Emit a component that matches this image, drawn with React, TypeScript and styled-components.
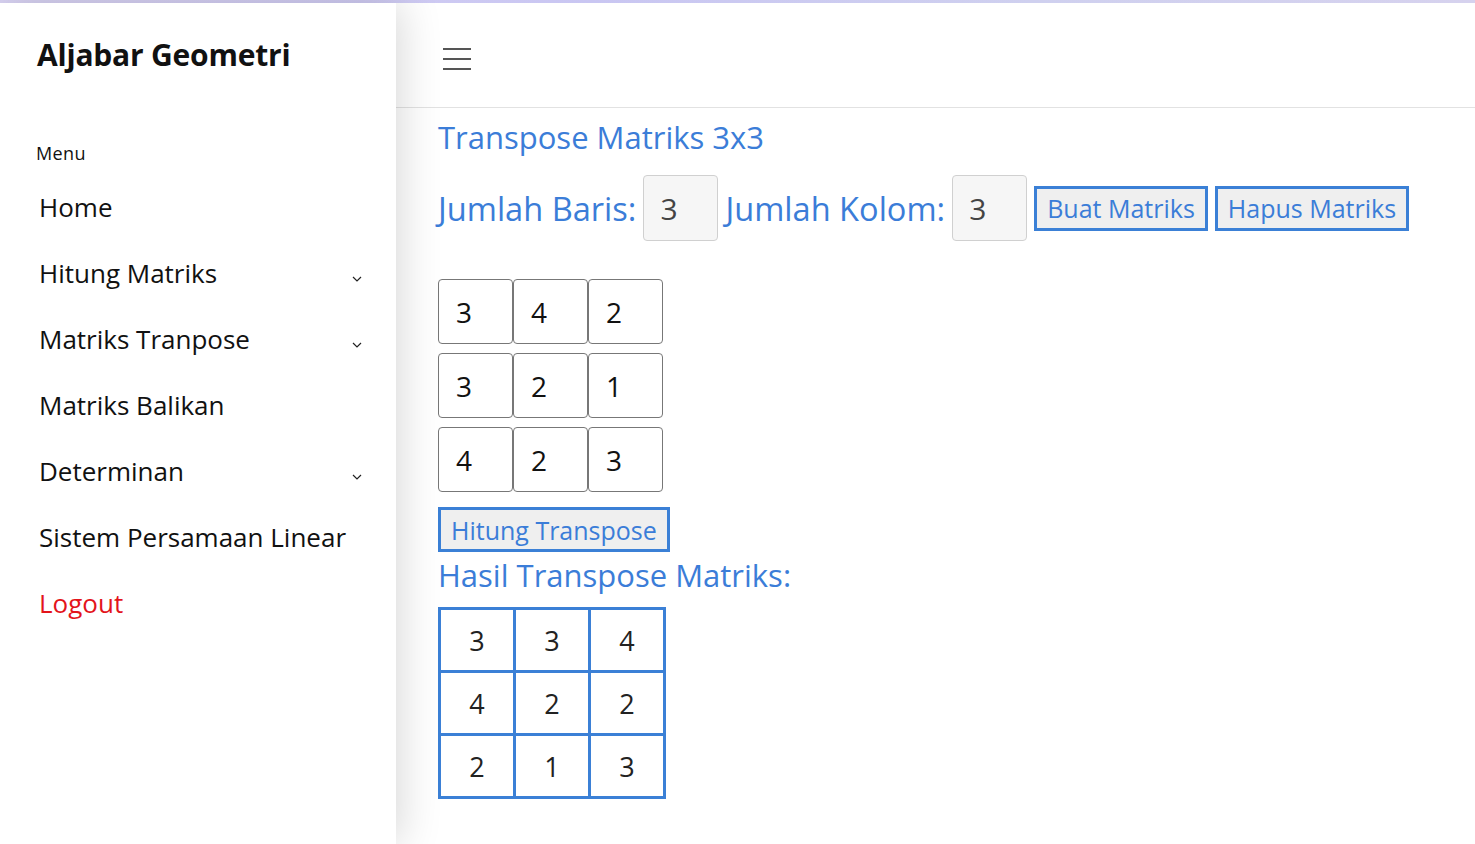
import React from "react";
import styled, { createGlobalStyle } from "styled-components";

const GlobalStyle = createGlobalStyle`
  html, body {
    margin: 0;
    padding: 0;
    background: #fff;
    font-family: "Open Sans", "Noto Sans", sans-serif;
  }
  * { box-sizing: border-box; }
`;

const menuItems = [
  { label: "Home", dropdown: false },
  { label: "Hitung Matriks", dropdown: true },
  { label: "Matriks Tranpose", dropdown: true },
  { label: "Matriks Balikan", dropdown: false },
  { label: "Determinan", dropdown: true },
  { label: "Sistem Persamaan Linear", dropdown: false },
];

const matrix = [
  [3, 4, 2],
  [3, 2, 1],
  [4, 2, 3],
];

const transpose = matrix[0].map((_, c) => matrix.map((row) => row[c]));

const Chevron = () => (
  <svg width="10" height="6" viewBox="0 0 10 6">
    <polyline points="1,1 5,5 9,1" fill="none" stroke="#222" strokeWidth="1.2" />
  </svg>
);

const Hamburger = () => (
  <svg width="28" height="22" viewBox="0 0 28 22">
    <rect x="0" y="0" width="28" height="2" fill="#555" />
    <rect x="0" y="10" width="28" height="2" fill="#555" />
    <rect x="0" y="20" width="28" height="2" fill="#555" />
  </svg>
);

const App = () => {
  return (
    <>
      <GlobalStyle />
      <TopStrip />
      <Layout>
        <Sidebar>
          <Brand>Aljabar Geometri</Brand>
          <MenuTitle>Menu</MenuTitle>
          <Nav>
            {menuItems.map((item) => (
              <NavItem key={item.label}>
                <span>{item.label}</span>
                {item.dropdown && <Chevron />}
              </NavItem>
            ))}
            <NavItem danger>
              <span>Logout</span>
            </NavItem>
          </Nav>
        </Sidebar>
        <Main>
          <TopBar>
            <Hamburger />
          </TopBar>
          <Content>
            <Title>Transpose Matriks 3x3</Title>
            <FormRow>
              <Label>Jumlah Baris:</Label>
              <SizeInput>3</SizeInput>
              <Label>Jumlah Kolom:</Label>
              <SizeInput>3</SizeInput>
              <OutlineButton>Buat Matriks</OutlineButton>
              <OutlineButton>Hapus Matriks</OutlineButton>
            </FormRow>
            <InputGrid>
              {matrix.flat().map((v, i) => (
                <Cell key={i}>{v}</Cell>
              ))}
            </InputGrid>
            <OutlineButton>Hitung Transpose</OutlineButton>
            <ResultTitle>Hasil Transpose Matriks:</ResultTitle>
            <ResultTable>
              {transpose.flat().map((v, i) => (
                <ResultCell key={i}>{v}</ResultCell>
              ))}
            </ResultTable>
          </Content>
        </Main>
      </Layout>
    </>
  );
};

export default App;

const TopStrip = styled.div`
  height: 3px;
  background: linear-gradient(90deg, #d9d3f3, #c9c6f2 40%, #cfd0ef 70%, #d6d2ee);
`;

const Layout = styled.div`
  display: flex;
  min-height: 841px;
`;

const Sidebar = styled.aside`
  width: 396px;
  flex-shrink: 0;
  background: #fff;
  padding: 34px 0 0 36px;
  position: relative;
  z-index: 1;
  box-shadow: 4px 0 40px rgba(0, 0, 0, 0.16);
`;

const Brand = styled.h1`
  margin: 0 0 0 1px;
  font-size: 30px;
  font-weight: 700;
  color: #111;
  letter-spacing: -0.2px;
  line-height: 36px;
`;

const MenuTitle = styled.div`
  margin-top: 69px;
  font-size: 18px;
  letter-spacing: 0.4px;
  color: #111;
  line-height: 22px;
`;

const Nav = styled.nav`
  display: flex;
  flex-direction: column;
  margin-top: 10px;
`;

const NavItem = styled.div<{ danger?: boolean }>`
  display: flex;
  align-items: center;
  justify-content: space-between;
  height: 66px;
  padding: 0 34px 0 3px;
  font-size: 26px;
  color: ${(p) => (p.danger ? "#e3141b" : "#111")};
  svg {
    margin-top: 12px;
  }
`;

const Main = styled.main`
  flex: 1;
  background: #fff;
`;

const TopBar = styled.header`
  height: 105px;
  display: flex;
  align-items: center;
  padding: 8px 0 0 47px;
  border-bottom: 1px solid #e2e2e2;
`;

const Content = styled.div`
  padding: 9px 42px 40px;
  display: flex;
  flex-direction: column;
  align-items: flex-start;
`;

const Title = styled.h2`
  margin: 0;
  font-size: 31px;
  font-weight: 400;
  color: #3b7dd8;
  line-height: 40px;
`;

const FormRow = styled.div`
  display: flex;
  align-items: center;
  gap: 7px;
  margin-top: 18px;
`;

const Label = styled.span`
  font-size: 32.6px;
  color: #3b7dd8;
`;

const SizeInput = styled.div`
  width: 75px;
  height: 66px;
  border: 1px solid #d0d0d0;
  border-radius: 4px;
  background: #f6f6f6;
  color: #444;
  font-size: 30px;
  display: flex;
  align-items: center;
  padding-left: 16px;
`;

const OutlineButton = styled.button`
  font-family: inherit;
  height: 45px;
  padding: 0 10px;
  border: 3px solid #3b80d6;
  background: #efefef;
  color: #3b7dd8;
  font-size: 25px;
  cursor: pointer;
`;

const InputGrid = styled.div`
  display: grid;
  grid-template-columns: repeat(3, 75px);
  grid-auto-rows: 65px;
  column-gap: 0;
  row-gap: 9px;
  margin: 38px 0 15px;
`;

const Cell = styled.div`
  border: 1px solid #777;
  border-radius: 4px;
  background: #fff;
  color: #111;
  font-size: 28px;
  display: flex;
  align-items: center;
  padding-left: 17px;
`;

const ResultTitle = styled.h3`
  margin: 3px 0 12px;
  font-size: 31px;
  font-weight: 400;
  color: #3b7dd8;
  line-height: 40px;
`;

const ResultTable = styled.div`
  display: grid;
  grid-template-columns: repeat(3, 72px);
  grid-auto-rows: 60px;
  gap: 3px;
  padding: 3px;
  background: #3b80d6;
`;

const ResultCell = styled.div`
  background: #fff;
  color: #222;
  font-size: 27px;
  display: flex;
  align-items: center;
  justify-content: center;
`;
